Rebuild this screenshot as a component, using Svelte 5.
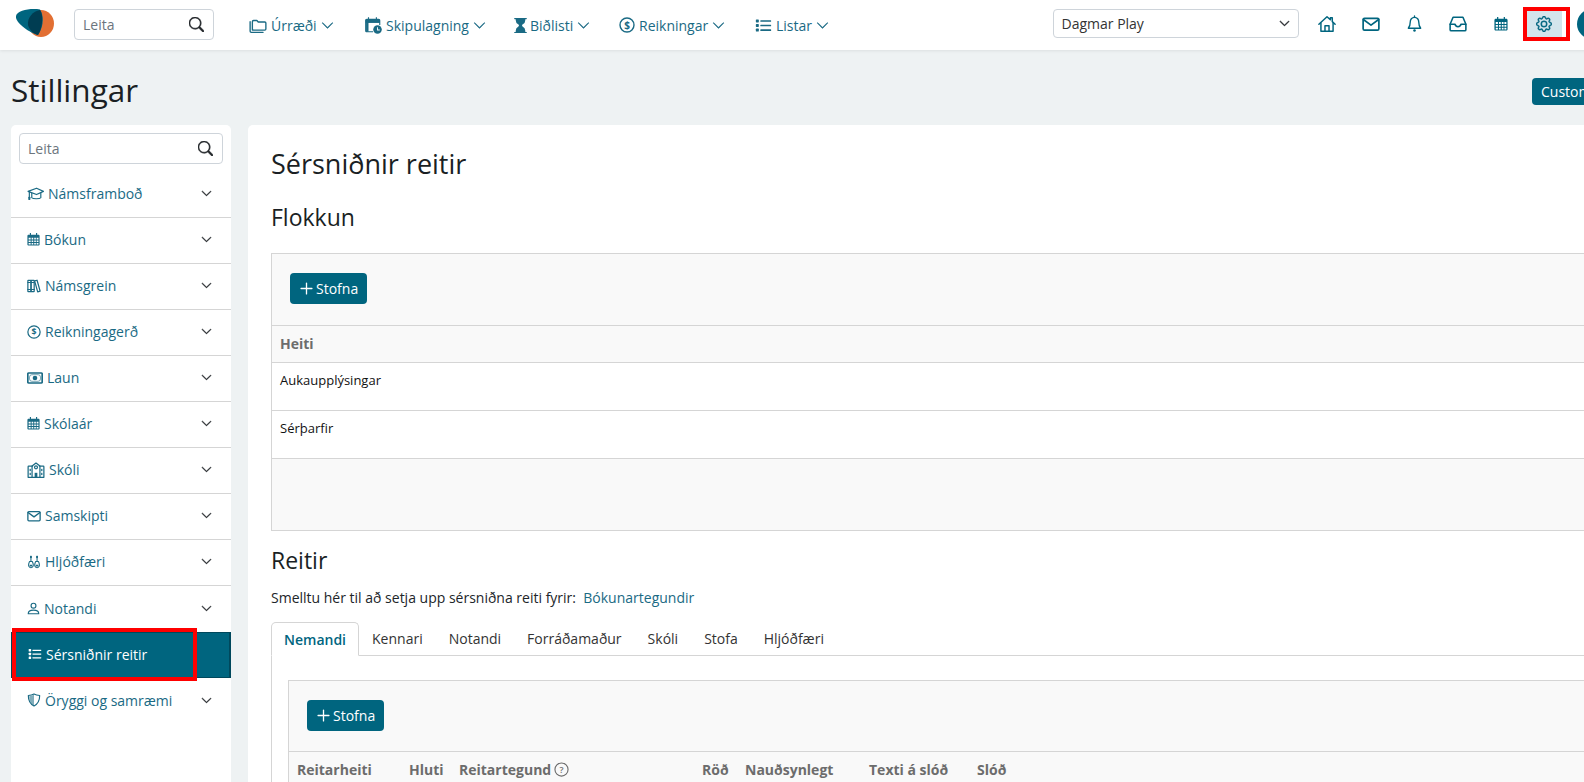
<script lang="ts">
  const search = '<path stroke="#212529" stroke-width=".6" d="M11.742 10.344a6.5 6.5 0 1 0-1.397 1.398h-.001c.03.04.062.078.098.115l3.85 3.85a1 1 0 0 0 1.415-1.414l-3.85-3.85a1.007 1.007 0 0 0-.115-.1zM12 6.5a5.5 5.5 0 1 1-11 0 5.5 5.5 0 0 1 11 0z"/>';
  const chevron = '<path fill-rule="evenodd" d="M1.646 4.646a.5.5 0 0 1 .708 0L8 10.293l5.646-5.647a.5.5 0 0 1 .708.708l-6 6a.5.5 0 0 1-.708 0l-6-6a.5.5 0 0 1 0-.708z"/>';

  // hand drawn on a 16 unit box
  const line = 'fill="none" stroke="currentColor" stroke-linejoin="round" stroke-linecap="round"';
  const icons: Record<string, string> = {
    folders: `<g ${line} stroke-width="1.2"><path d="M3 12.5V5c0-.6.4-1 1-1h3l1.2 1.3H14c.6 0 1 .4 1 1v5.2c0 .6-.4 1-1 1H4c-.6 0-1-.4-1-1z"/><path d="M1 5v8.5c0 .6.4 1 1 1h10.500"/></g>`,
    planner: `<path d="M3.500 1h1v1.500h6V1h1v1.500H13c.8 0 1.500.7 1.500 1.500v4h-1V6h-11v7.500H8v1H2.500c-.8 0-1.500-.7-1.500-1.500V4c0-.8.7-1.500 1.500-1.500h1z"/><path d="M1.500 3.200h12.500V6H1.500zM2 6h2v8H2z"/><circle cx="12" cy="12" r="3.800"/><path d="M11.600 10h.8v2h1.600v.8h-2.400z" fill="#fff"/>`,
    hourglass: `<path d="M2.500 15a.5.5 0 1 1 0-1h1v-1a4.500 4.500 0 0 1 2.557-4.060c.29-.139.443-.377.443-.59v-.7c0-.213-.154-.451-.443-.59A4.500 4.500 0 0 1 3.500 3V2h-1a.5.5 0 0 1 0-1h11a.5.5 0 0 1 0 1h-1v1a4.500 4.500 0 0 1-2.557 4.060c-.29.139-.443.377-.443.59v.7c0 .213.154.451.443.59A4.500 4.500 0 0 1 12.500 13v1h1a.5.5 0 0 1 0 1h-11z"/>`,
    dollar: `<circle cx="8" cy="8" r="7" fill="none" stroke="currentColor" stroke-width="1.400"/><text x="8" y="11.600" font-size="10" font-weight="700" text-anchor="middle" font-family="Open Sans, sans-serif">$</text>`,
    list: `<g><rect x=".8" y="2.300" width="2.800" height="2.800" rx=".6"/><rect x=".8" y="6.600" width="2.800" height="2.800" rx=".6"/><rect x=".8" y="10.900" width="2.800" height="2.800" rx=".6"/><rect x="5" y="3" width="10.200" height="1.500" rx=".5"/><rect x="5" y="7.300" width="10.200" height="1.500" rx=".5"/><rect x="5" y="11.600" width="10.200" height="1.500" rx=".5"/></g>`,
    house: `<g ${line} stroke-width="1.300"><path d="M.8 8.200 8 1.500l3 2.800V2.400h1.700v3.500l2.500 2.300"/><path d="M2.600 7v7.500h10.800V7"/><path d="M6.200 14.500V9.600h3.600v4.900"/></g>`,
    mail: `<g ${line} stroke-width="1.500"><rect x="1" y="3" width="14" height="10.500" rx="1.200"/><path d="m1.200 4 6.800 5 6.800-5"/></g>`,
    bell: `<g ${line} stroke-width="1.300"><path d="M8 2.200c-2.600 0-4 2-4 4.400 0 3-.8 4.600-1.800 5.900h11.600c-1-1.300-1.800-2.900-1.800-5.900 0-2.400-1.400-4.400-4-4.400z"/><path d="M8 1v1.200"/></g><circle cx="8" cy="14.600" r="1.200"/>`,
    inbox: `<g ${line} stroke-width="1.400"><path d="M3.600 2h8.800l2.600 6.200V13c0 .6-.4 1-1 1H2c-.6 0-1-.4-1-1V8.200z"/><path d="M1 8.200h4.400c.2 1.400 1.200 2.200 2.600 2.200s2.400-.8 2.600-2.200H15"/></g>`,
    calendar: `<path d="M3.500 0h1.400v2h6.200V0h1.400v2H14c.8 0 1.500.7 1.500 1.500V14c0 .8-.7 1.500-1.500 1.500H2C1.200 15.500.5 14.800.5 14V3.500C.5 2.700 1.200 2 2 2h1.500zM2 5.800v2.200h2.500V5.800zm3.700 0v2.200h2V5.800zm3.200 0v2.200h2V5.800zm3 0v2.200h2.200V5.800zM2 9.200v2h2.500v-2zm3.700 0v2h2v-2zm3.200 0v2h2v-2zm3 0v2h2.200v-2zM2 12.400v1.800h2.500v-1.800zm3.700 0v1.800h2v-1.800zm3.200 0v1.800h2v-1.800zm3 0v1.800h2.200v-1.800z" fill-rule="evenodd"/>`,
    gear: `<g stroke="currentColor" stroke-width=".45"><path d="M8 4.754a3.246 3.246 0 1 0 0 6.492 3.246 3.246 0 0 0 0-6.492zM5.754 8a2.246 2.246 0 1 1 4.492 0 2.246 2.246 0 0 1-4.492 0z"/><path d="M9.796 1.343c-.527-1.790-3.065-1.790-3.592 0l-.094.319a.873.873 0 0 1-1.255.52l-.292-.16c-1.640-.892-3.433.902-2.540 2.541l.159.292a.873.873 0 0 1-.52 1.255l-.319.094c-1.790.527-1.790 3.065 0 3.592l.319.094a.873.873 0 0 1 .52 1.255l-.16.292c-.892 1.640.901 3.434 2.541 2.540l.292-.159a.873.873 0 0 1 1.255.52l.094.319c.527 1.790 3.065 1.790 3.592 0l.094-.319a.873.873 0 0 1 1.255-.52l.292.16c1.640.893 3.434-.902 2.540-2.541l-.159-.292a.873.873 0 0 1 .52-1.255l.319-.094c1.790-.527 1.790-3.065 0-3.592l-.319-.094a.873.873 0 0 1-.52-1.255l.16-.292c.893-1.640-.902-3.433-2.541-2.540l-.292.159a.873.873 0 0 1-1.255-.52l-.094-.319zm-2.633.283c.246-.835 1.428-.835 1.674 0l.094.319a1.873 1.873 0 0 0 2.693 1.115l.291-.16c.764-.415 1.600.42 1.184 1.185l-.159.292a1.873 1.873 0 0 0 1.116 2.692l.318.094c.835.246.835 1.428 0 1.674l-.319.094a1.873 1.873 0 0 0-1.115 2.693l.16.291c.415.764-.42 1.600-1.185 1.184l-.291-.159a1.873 1.873 0 0 0-2.693 1.116l-.094.318c-.246.835-1.428.835-1.674 0l-.094-.319a1.873 1.873 0 0 0-2.692-1.115l-.292.16c-.764.415-1.600-.42-1.184-1.185l.159-.291A1.873 1.873 0 0 0 1.945 8.930l-.319-.094c-.835-.246-.835-1.428 0-1.674l.319-.094A1.873 1.873 0 0 0 3.060 4.377l-.16-.292c-.415-.764.42-1.600 1.185-1.184l.292.159a1.873 1.873 0 0 0 2.692-1.115l.094-.319z"/></g>`,
    cap: `<g ${line} stroke-width="1.100"><path d="M1 6 9 3l6.500 3L9 9z"/><path d="M4.500 7.500V12c1 1.300 7.500 1.300 8.500 0V7.400"/><path d="M2.200 6.500v4.500"/></g><rect x="1.200" y="11" width="2" height="3" rx=".5"/>`,
    books: `<g ${line} stroke-width="1.400"><rect x="1" y="1.500" width="3.600" height="13" rx=".4"/><rect x="4.600" y="1.500" width="3.600" height="13" rx=".4"/><path d="m8.700 2.200 2.800-.8 3.500 12.500-2.800.8z"/><path d="M1 4h7.200M1 12h7.200"/></g>`,
    cash: `<rect x=".8" y="3" width="14.400" height="10" rx="1" fill="none" stroke="currentColor" stroke-width="1.700"/><rect x="2.500" y="4.700" width="11" height="6.600" rx="2.400" fill="none" stroke="currentColor" stroke-width=".6"/><circle cx="8" cy="8" r="2.300"/>`,
    school: `<g ${line} stroke-width="1.100"><path d="M5 4.500h-3.500c-.3 0-.5.200-.5.500v9.500h14V5c0-.3-.2-.5-.5-.5H11"/><path d="M4.500 14.500V4.500L8 1.800l3.500 2.700v10"/><circle cx="8" cy="5.600" r="1.300"/></g><rect x="2.300" y="7" width="1.100" height="2"/><rect x="12.600" y="7" width="1.100" height="2"/><rect x="2.300" y="10.500" width="1.100" height="2"/><rect x="12.600" y="10.500" width="1.100" height="2"/><rect x="6.800" y="10.500" width="2.400" height="4"/>`,
    instrument: `<g ${line} stroke-width="1.200"><path d="M4.500 1.500v6M11.500 1.500v6"/><path d="M2.800 7.500h3.400l.8 2.500c.8 2.500-.6 4.500-2.500 4.500S1.200 12.500 2 10z"/><path d="M9.800 7.500h3.400l.8 2.500c.8 2.500-.6 4.500-2.500 4.500S8.200 12.500 9 10z"/></g><rect x="3.500" y="1" width="2" height="2.500"/><rect x="10.500" y="1" width="2" height="2.500"/><path d="M3 11h3v2H3zM10 11h3v2h-3z"/>`,
    person: `<g ${line} stroke-width="1.400"><circle cx="8" cy="4.500" r="3"/><path d="M1.500 14.500c0-3 2-4.500 6.500-4.500s6.500 1.500 6.500 4.500z"/></g>`,
    shield: `<path d="M8 1.200c-2 1-4.400 1.500-6.500 1.700 0 5.500 1.700 9.500 6.500 12 4.800-2.500 6.500-6.500 6.500-12C12.400 2.700 10 2.200 8 1.200z" fill="none" stroke="currentColor" stroke-width="1.300" stroke-linejoin="round"/><path d="M8 1.600v13c-3.600-2-5.500-5.500-5.500-11 2-.2 3.800-.8 5.500-2z" opacity=".55"/>`,
    help: `<circle cx="8" cy="8" r="7" fill="none" stroke="currentColor" stroke-width="1.200"/><text x="8" y="11.400" font-size="9.500" font-weight="600" text-anchor="middle" font-family="Open Sans, sans-serif">?</text>`,
    plus: `<path d="M8 1.500a.7.700 0 0 1 .7.700v5.100h5.100a.7.700 0 0 1 0 1.400H8.700v5.100a.7.700 0 0 1-1.400 0V8.700H2.200a.7.700 0 0 1 0-1.400h5.100V2.200A.7.700 0 0 1 8 1.500z"/>`,
  };

  const topNav = [
    { label: 'Úrræði', icon: 'folders', size: 18, width: 115, trim: 0 },
    { label: 'Skipulagning', icon: 'planner', size: 18, width: 150, trim: 0 },
    { label: 'Biðlisti', icon: 'hourglass', size: 17, width: 105, trim: -2.5 },
    { label: 'Reikningar', icon: 'dollar', size: 16, width: 136, trim: 0 },
    { label: 'Listar', icon: 'list', size: 17, width: 90, trim: 0 },
  ];

  const topIcons = [
    { icon: 'house', size: 18 },
    { icon: 'mail', size: 18 },
    { icon: 'bell', size: 17 },
    { icon: 'inbox', size: 18 },
    { icon: 'calendar', size: 14 },
  ];

  const sideItems = [
    { label: 'Námsframboð', icon: 'cap', size: 17 },
    { label: 'Bókun', icon: 'calendar', size: 13 },
    { label: 'Námsgrein', icon: 'books', size: 14 },
    { label: 'Reikningagerð', icon: 'dollar', size: 14 },
    { label: 'Laun', icon: 'cash', size: 16 },
    { label: 'Skólaár', icon: 'calendar', size: 13 },
    { label: 'Skóli', icon: 'school', size: 18 },
    { label: 'Samskipti', icon: 'mail', size: 14 },
    { label: 'Hljóðfæri', icon: 'instrument', size: 14 },
    { label: 'Notandi', icon: 'person', size: 13 },
    { label: 'Sérsniðnir reitir', icon: 'list', size: 14, active: true },
    { label: 'Öryggi og samræmi', icon: 'shield', size: 14 },
  ];

  const tabs = ['Nemandi', 'Kennari', 'Notandi', 'Forráðamaður', 'Skóli', 'Stofa', 'Hljóðfæri'];
  const fieldColumns = [
    { label: 'Reitarheiti', width: 112 },
    { label: 'Hluti', width: 50 },
    { label: 'Reitartegund', width: 243, help: true },
    { label: 'Röð', width: 43 },
    { label: 'Nauðsynlegt', width: 124 },
    { label: 'Texti á slóð', width: 108 },
    { label: 'Slóð', width: 80 },
  ];
</script>

{#snippet icon(name: string, size: number, trim = 0)}
  <svg class="icon" style={trim ? `margin: 0 ${trim}px` : undefined} width={size} height={size} viewBox="0 0 16 16" fill="currentColor">{@html icons[name]}</svg>
{/snippet}

{#snippet searchBox(cls: string)}
  <label class="search {cls}">
    <input placeholder="Leita" />
    <svg width="15" height="15" viewBox="0 0 16 16" fill="#212529">{@html search}</svg>
  </label>
{/snippet}

{#snippet addButton()}
  <button class="btn">
    <svg width="15" height="15" viewBox="0 0 16 16" fill="#fff">{@html icons.plus}</svg>
    Stofna
  </button>
{/snippet}

<div class="page">
  <header class="navbar">
    <svg class="logo" width="40" height="30" viewBox="0 0 40 30">
      <ellipse cx="25" cy="15.500" rx="13" ry="13.500" fill="#e26f33" />
      <path d="M24 1.500C15 0 1 2 0 8c-1 6 12 16 22 19 6-9 6-19 2-25.500z" fill="#00657f" />
      <path d="M24 2c-7 1-13 8-12 15 1 5 6 9 10 10 4-6 6-19 2-25z" fill="#003d52" />
    </svg>
    {@render searchBox('nav-search')}
    <nav class="menu">
      {#each topNav as item}
        <a class="menu-item" style="width: {item.width}px">
          {@render icon(item.icon, item.size, item.trim)}
          <span>{item.label}</span>
          <svg width="13" height="13" viewBox="0 0 16 16" fill="currentColor" stroke="currentColor" stroke-width=".6">{@html chevron}</svg>
        </a>
      {/each}
    </nav>
    <div class="right">
      <div class="select">
        Dagmar Play
        <svg width="11" height="11" viewBox="0 0 16 16" fill="#212529" stroke="#212529">{@html chevron}</svg>
      </div>
      <div class="tools">
        {#each topIcons as tool}
          <span class="tool">{@render icon(tool.icon, tool.size)}</span>
        {/each}
        <span class="tool gear">
          {@render icon('gear', 16)}
          <span class="mark"></span>
        </span>
      </div>
      <span class="avatar"></span>
    </div>
  </header>

  <div class="page-head">
    <h1>Stillingar</h1>
    <button class="btn custom">Customer</button>
  </div>

  <div class="columns">
    <aside class="sidebar">
      {@render searchBox('side-search')}
      <ul>
        {#each sideItems as item}
          <li class:active={item.active}>
            <span class="side-label">
              {@render icon(item.icon, item.size)}
              {item.label}
            </span>
            {#if item.active}
              <span class="mark"></span>
            {:else}
              <svg width="11" height="11" viewBox="0 0 16 16" fill="#212529" stroke="#212529" stroke-width=".8">{@html chevron}</svg>
            {/if}
          </li>
        {/each}
      </ul>
    </aside>

    <main class="content">
      <h2>Sérsniðnir reitir</h2>
      <h3>Flokkun</h3>
      <section class="card">
        <div class="toolbar">{@render addButton()}</div>
        <div class="thead">Heiti</div>
        <div class="row">Aukaupplýsingar</div>
        <div class="row">Sérþarfir</div>
        <div class="card-foot"></div>
      </section>

      <h3 class="fields-title">Reitir</h3>
      <p class="intro">Smelltu hér til að setja upp sérsniðna reiti fyrir:&nbsp; <a>Bókunartegundir</a></p>

      <div class="tabs">
        {#each tabs as tab, i}
          <span class="tab" class:current={i === 0}>{tab}</span>
        {/each}
      </div>
      <div class="tab-panel">
        <section class="card">
          <div class="toolbar">{@render addButton()}</div>
          <div class="thead fields">
            {#each fieldColumns as col}
              <span style="width: {col.width}px">
                {col.label}
                {#if col.help}{@render icon('help', 15)}{/if}
              </span>
            {/each}
          </div>
        </section>
      </div>
    </main>
  </div>
</div>

<style>
  :global(html), :global(body) {
    height: 100%;
    overflow: hidden;
  }

  :global(body) {
    background: #eef2f3;
    font-family: "Open Sans", sans-serif;
    color: #212529;
  }

  .page {
    width: 1700px;
    height: 782px;
    overflow: hidden;
  }

  .icon {
    flex-shrink: 0;
  }

  .navbar {
    display: flex;
    align-items: center;
    height: 50px;
    width: 1608px;
    background: #fff;
    box-shadow: 0 1px 3px rgba(0, 0, 0, 0.08);
    padding-left: 16px;
    box-sizing: border-box;
    position: relative;
  }

  .logo {
    margin-right: 18px;
    margin-top: -4px;
  }

  .search {
    display: flex;
    align-items: center;
    justify-content: space-between;
    box-sizing: border-box;
    height: 31px;
    background: #fff;
    border: 1px solid #ced4da;
    border-radius: 4px;
    padding: 0 9px 0 8px;
  }

  .search input {
    border: none;
    outline: none;
    width: 100px;
    padding: 0;
    font: 14px "Open Sans", sans-serif;
    color: #6c757d;
    background: transparent;
  }

  .search input::placeholder {
    color: #6c757d;
    opacity: 1;
  }

  .nav-search {
    width: 140px;
    margin-top: -1px;
  }

  .side-search {
    width: 204px;
    margin-left: 8px;
  }

  .menu {
    display: flex;
    margin-left: 35px;
  }

  .menu-item {
    display: flex;
    align-items: center;
    gap: 4px;
    font-size: 14px;
    color: #1a6a84;
  }

  .right {
    display: flex;
    align-items: center;
    margin-left: auto;
    padding-right: 1px;
  }

  .select {
    display: flex;
    align-items: center;
    justify-content: space-between;
    box-sizing: border-box;
    width: 246px;
    height: 29px;
    padding: 0 8px;
    border: 1px solid #ced4da;
    border-radius: 4px;
    font-size: 14px;
    color: #333;
    margin-top: -3px;
  }

  .tools {
    display: flex;
    align-items: center;
    margin-left: 7px;
  }

  .tool {
    display: flex;
    align-items: center;
    justify-content: center;
    width: 43.500px;
    height: 26px;
    color: #00657f;
    margin-top: -3px;
  }

  .gear {
    position: relative;
    width: 36px;
    margin-left: 3px;
    background: #d3e5ec;
  }

  .gear .mark {
    position: absolute;
    left: -3px;
    top: -4px;
    width: 47px;
    height: 34px;
    border: 4px solid #f00;
    box-sizing: border-box;
  }

  .avatar {
    width: 30px;
    height: 30px;
    border-radius: 50%;
    background: #00647f;
    margin-left: 15px;
    margin-top: -3px;
  }

  .page-head {
    display: flex;
    align-items: center;
    justify-content: space-between;
    width: 1600px;
    box-sizing: border-box;
    height: 75px;
    padding: 0 0 0 11px;
  }

  h1 {
    margin: 3px 0 0;
    font-size: 31.500px;
    font-weight: 500;
    color: #1a1f24;
  }

  .custom {
    margin-top: 7px;
    height: 27px;
    padding: 0 9px;
    width: 84px;
    justify-content: flex-start;
    margin-right: -16px;
    font-weight: 500;
  }

  .btn {
    display: inline-flex;
    align-items: center;
    gap: 2px;
    background: #00657f;
    color: #fff;
    border: none;
    border-radius: 4px;
    font: 14px "Open Sans", sans-serif;
  }

  .toolbar .btn {
    height: 31px;
    padding: 0 9px;
  }

  .columns {
    display: flex;
    align-items: stretch;
    gap: 17px;
    padding-left: 11px;
    height: 657px;
  }

  .sidebar {
    flex: 0 0 220px;
    background: #fff;
    border-radius: 5px 5px 0 0;
    padding-top: 8px;
  }

  .sidebar ul {
    list-style: none;
    margin: 8px 0 0;
    padding: 0;
  }

  .sidebar li {
    position: relative;
    display: flex;
    align-items: center;
    justify-content: space-between;
    box-sizing: border-box;
    height: 46px;
    padding: 0 19px 2px 16px;
    border-bottom: 1px solid #d5d5d5;
    color: #1a6a84;
    font-size: 14px;
  }

  .sidebar li:nth-last-child(-n + 3) {
    border-bottom: none;
  }

  .sidebar li:last-child {
    border: none;
  }

  .side-label {
    display: flex;
    align-items: center;
    gap: 4px;
  }

  .sidebar li.active {
    background: #00657f;
    color: #fff;
    border: 1px solid #00485c;
    border-right-width: 2px;
  }

  .sidebar li.active .mark {
    position: absolute;
    left: 0;
    top: -5px;
    width: 185px;
    height: 53px;
    border: 4px solid #f00;
    box-sizing: border-box;
  }

  .content {
    flex: 1;
    background: #fff;
    border-radius: 5px 0 0 0;
    padding: 24px 0 0 23px;
    overflow: hidden;
    min-width: 0;
  }

  h2 {
    margin: 0;
    font-size: 27px;
    line-height: 30px;
    font-weight: 500;
    color: #1a1f24;
  }

  h3 {
    margin: 25px 0 23px;
    font-size: 23px;
    line-height: 26px;
    font-weight: 500;
    color: #1a1f24;
  }

  h3.fields-title {
    margin: 16px 0 16px;
  }

  .card {
    background: #f9f9f9;
    border: 1px solid #d5d5d5;
    font-size: 13px;
  }

  .toolbar {
    padding: 19px 18px 21px;
    border-bottom: 1px solid #d5d5d5;
  }

  .thead {
    box-sizing: border-box;
    height: 37px;
    display: flex;
    align-items: center;
    padding: 0 0 2px 8px;
    font-size: 14px;
    font-weight: 700;
    color: #6c6c6c;
    border-bottom: 1px solid #d5d5d5;
  }

  .thead span {
    display: flex;
    align-items: center;
    gap: 3px;
    flex-shrink: 0;
    white-space: nowrap;
  }

  .row {
    box-sizing: border-box;
    height: 48px;
    padding: 8px 8px 0;
    background: #fff;
    border-bottom: 1px solid #d5d5d5;
    color: #111;
  }

  .card-foot {
    height: 71px;
  }

  .intro {
    margin: 0 0 15px;
    font-size: 14px;
    line-height: 18px;
  }

  .intro a {
    color: #1a6a84;
  }

  .tabs {
    display: flex;
    height: 34px;
    box-sizing: border-box;
    border-bottom: 1px solid #d5d5d5;
  }

  .tab {
    box-sizing: border-box;
    height: 33px;
    padding: 0 13px;
    line-height: 33px;
    font-size: 14px;
    color: #333;
  }

  .tab.current {
    height: 34px;
    padding: 0 12px;
    color: #00657f;
    font-weight: 600;
    background: #fff;
    border: 1px solid #d5d5d5;
    border-bottom-color: #fff;
    border-radius: 5px 5px 0 0;
  }

  .tab-panel {
    border-left: 1px solid #d5d5d5;
    padding: 24px 0 0 16px;
  }

  .tab-panel .toolbar {
    padding-bottom: 20px;
  }
</style>
